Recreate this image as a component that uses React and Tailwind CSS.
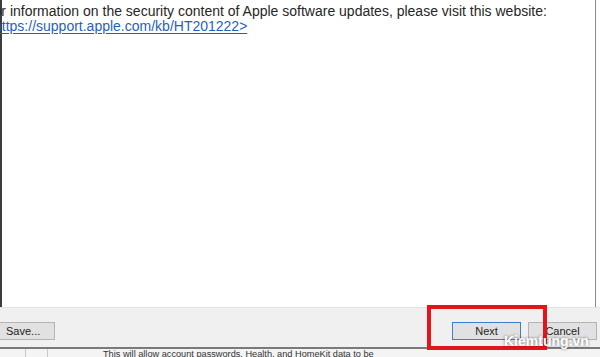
export default function App() {
    return (
        <div className="relative h-[357px] w-[600px] overflow-hidden bg-white font-['Liberation_Sans',Arial,sans-serif]">
            <div className="flex h-[307px] w-[596px] flex-col border-l-2 border-r border-l-[#3c3c3c] border-r-[#8a8a8a] bg-white pt-[4px]">
                <p className="ml-[-17px] whitespace-nowrap text-[14px] leading-[15px] text-[#262626]">
                    For information on the security content of Apple software updates, please visit this website:
                </p>
                <p className="ml-[-8px] whitespace-nowrap text-[14px] leading-[15px] text-[#1f5fbf] underline underline-offset-2">
                    https://support.apple.com/kb/HT201222&gt;
                </p>
            </div>

            <div className="flex h-[40px] items-start border-t border-[#e4e4e4] bg-[#f0f0f0] pt-[14px]">
                <button className="ml-[-4px] h-[18px] w-[59px] border border-[#b4b4b4] bg-[#e1e1e1] pl-[9px] text-left text-[11px] leading-[16px] text-[#222]">
                    Save...
                </button>
                <div className="flex-1" />
                <button className="h-[18px] w-[69px] border border-[#3c7fd0] bg-[#e1e1e1] text-[11px] leading-[16px] text-[#222]">
                    Next
                </button>
                <button className="ml-[7px] mr-[3px] h-[18px] w-[69px] border border-[#b4b4b4] bg-[#e1e1e1] text-[11px] leading-[16px] text-[#222]">
                    Cancel
                </button>
            </div>

            <div className="flex h-[10px] border-t-2 border-[#7a7a7a] bg-[#f4f4f4]">
                <div className="w-[26px] border-r border-[#c8c8c8]" />
                <div className="w-[22px] border-r border-[#c8c8c8]" />
                <p className="ml-[55px] whitespace-nowrap text-[9.2px] leading-[10px] text-[#333]">
                    This will allow account passwords, Health, and HomeKit data to be
                </p>
            </div>

            <div className="absolute left-[427px] top-[305px] h-[45px] w-[120px] border-4 border-[#e3151b]" />

            <span className="absolute left-[504px] top-[333px] text-[14px] font-bold leading-[16px] text-white [text-shadow:0_0_3px_rgba(0,0,0,0.55)]">
                Kiemtung.vn
            </span>
        </div>
    );
}
